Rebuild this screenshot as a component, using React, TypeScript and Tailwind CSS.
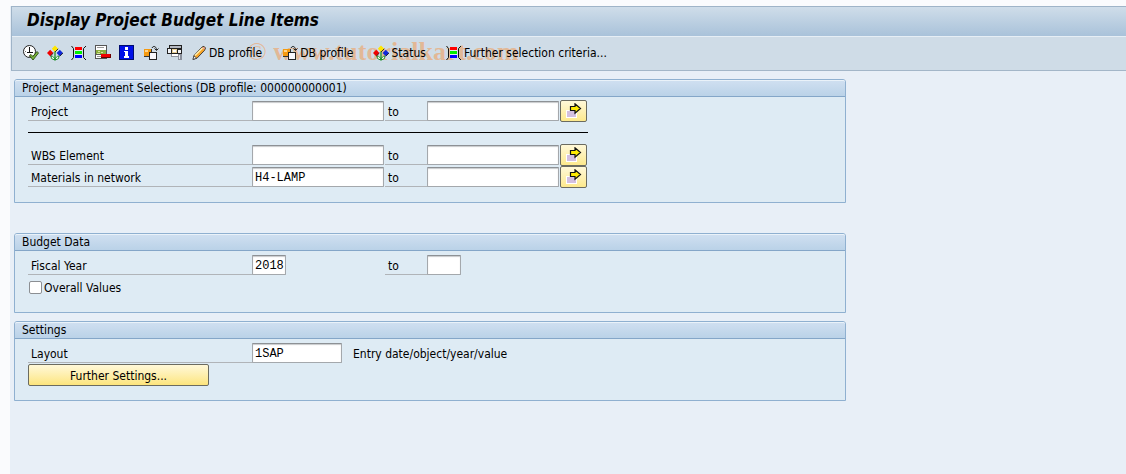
import type { InputHTMLAttributes, ReactNode } from "react"

function Icon({ children }: { children: ReactNode }) {
  return (
    <svg width="16" height="16" viewBox="0 0 16 16" className="shrink-0" aria-hidden="true">
      {children}
    </svg>
  )
}

function ExecuteIcon() {
  return (
    <Icon>
      <circle cx="6.5" cy="6.5" r="6" fill="#fff" stroke="#222" strokeWidth="1" />
      <path d="M6.500 2v5.500M4 7.500h6" stroke="#111" fill="none" />
      <path d="M2 6.500h1M6.500 11v1" stroke="#777" />
      <path d="M6.500 10.500l1.500-1 2 2L14 6.500l1.500 1.500L10 15z" fill="#7cb83e" stroke="#2c4a12" strokeWidth=".9" />
    </Icon>
  )
}

function StatusIcon() {
  return (
    <Icon>
      <path d="M4 11c2 0 3.500 1.500 4 4 .5-2.500 2-4 4-4l-.5 2.500L8.500 15h-1l-3-1.500z" fill="#f2fbf0" stroke="#128a1c" strokeWidth=".9" />
      <path d="M8 6v9" stroke="#128a1c" strokeWidth="1.200" />
      <path d="M8 .6l3.200 3.200L8 7 4.800 3.800z" fill="#ffe600" />
      <path d="M3.200 4.800L6.400 8l-3.200 3.200L0 8z" fill="#f00000" />
      <path d="M12.800 4.800L16 8l-3.200 3.200L9.600 8z" fill="#1028d8" />
      <path d="M8 7l3.200-3.200M3.200 11.200L6.400 8M12.800 11.200L16 8" stroke="#222" strokeWidth=".9" fill="none" />
    </Icon>
  )
}

function SelectionIcon() {
  return (
    <Icon>
      <path d="M.5 1l2 2.500v9L.5 15M15 1l-2.500 2.500v9L15 15" fill="none" stroke="#111" />
      <g shapeRendering="crispEdges">
        <rect x="4" y="2" width="7" height="11" fill="#e6edf3" />
        <rect x="4" y="2" width="7" height="3" fill="#f00" />
        <rect x="4" y="6" width="7" height="3" fill="#0e0" />
        <rect x="4" y="10" width="7" height="3" fill="#00f" />
      </g>
    </Icon>
  )
}

function DeleteRowIcon() {
  return (
    <Icon>
      <g shapeRendering="crispEdges">
        <path d="M0 0h12v14H0z" fill="#555" />
        <path d="M1 1h10v4H1zM1 10h10v3H1z" fill="#fff" />
        <path d="M2 2h7v1H2zM2 11h6v1H2z" fill="#999" />
        <path d="M1 5h10v4H1z" fill="#8aad3c" />
        <path d="M3 6h2v1H3zM6 7h2v1H6zM2 8h3v1H2z" fill="#d6e69a" />
        <path d="M6 9h10v4H6z" fill="#6b0000" />
        <path d="M6 9h9v3H6z" fill="#f00000" />
      </g>
    </Icon>
  )
}

function InfoIcon() {
  return (
    <Icon>
      <g shapeRendering="crispEdges">
        <path d="M0 0h15v15H0z" fill="#000c70" />
        <path d="M1 1h13v13H1z" fill="#0010e8" />
        <path d="M6 2h3v3H6zM5 6h4v5h1v2H5v-2h1V7H5z" fill="#fff" />
      </g>
    </Icon>
  )
}

function VariantIcon() {
  return (
    <Icon>
      <path d="M9 3C10 .5 13.500 1 13.500 5M11.500 3.500l2 2 2-2" fill="none" stroke="#222" />
      <g shapeRendering="crispEdges">
        <path d="M1 4h8v8H1z" fill="#333" />
        <path d="M1 4h7v7H1z" fill="#f59a10" />
        <path d="M2 5h3v2H2z" fill="#ffd48a" />
        <path d="M6 7h8v8H6z" fill="#222" />
        <path d="M7 8h6v6H7z" fill="#f8f8fc" />
      </g>
    </Icon>
  )
}

function ProfileIcon() {
  return (
    <Icon>
      <g shapeRendering="crispEdges">
        <path d="M2 0h13v9H0V3h2z" fill="#222" />
        <path d="M3 1h11v2H3z" fill="#b4b8c2" />
        <path d="M1 4h3v4H1zM11 5h3v3h-3z" fill="#f2f4f8" />
        <path d="M5 4h5v4H5z" fill="#e8cf96" />
        <path d="M6 5h3v2H6z" fill="#fff" />
        <path d="M4 9h11v3H4z" fill="#8d919b" />
        <path d="M5 9h6v2H5z" fill="#fff" />
        <path d="M11 10h4v5h-4z" fill="#8a909c" />
        <path d="M12 10h1v4h-1z" fill="#e4e6ee" />
      </g>
    </Icon>
  )
}

function PencilIcon() {
  return (
    <Icon>
      <path d="M2 14.500l1-4L11 2l2-.7L14.500 3l-.8 2.200-7.700 8z" fill="#f7a427" stroke="#333" strokeWidth=".9" />
      <path d="M4 10.500L11.500 3" stroke="#fff0b0" strokeWidth="1.500" />
      <path d="M2 14.500l1-3.500 2.500 2z" fill="#fff" stroke="#333" strokeWidth=".7" />
      <path d="M11.500 2.500l1.500-.5.8 1.500-1 1z" fill="#e8a0b0" />
    </Icon>
  )
}

function MultipleIcon() {
  return (
    <Icon>
      <g shapeRendering="crispEdges">
        <path d="M0 7h11v8H0z" fill="#fff" />
        <path d="M1 8h9v6H1z" fill="#d3bfe0" />
      </g>
      <path d="M4.500 3.500H9V.8L14.500 5.500 9 10.200V7.500H4.500z" fill="#ffea00" stroke="#111" strokeWidth="1.200" />
    </Icon>
  )
}

const iconActions = [
  { label: "Execute", icon: <ExecuteIcon /> },
  { label: "Status", icon: <StatusIcon /> },
  { label: "Dynamic selections", icon: <SelectionIcon /> },
  { label: "Delete row", icon: <DeleteRowIcon /> },
  { label: "Information", icon: <InfoIcon /> },
  { label: "Get variant", icon: <VariantIcon /> },
  { label: "Profile", icon: <ProfileIcon /> },
]

const textActions = [
  { label: "DB profile", icon: <PencilIcon /> },
  { label: "DB profile", icon: <VariantIcon /> },
  { label: "Status", icon: <StatusIcon /> },
  { label: "Further selection criteria...", icon: <SelectionIcon /> },
]

function Toolbar() {
  return (
    <div className="relative flex h-[34px] items-center gap-2 border-b border-[#a3b6c8] bg-[#cfdce7] pb-px pl-[11px]">
      {/* Watermark sits under the toolbar buttons */}
      <span className="pointer-events-none absolute top-0 left-[235px] font-['Liberation_Serif',serif] text-[26px] leading-[29px] font-bold whitespace-nowrap text-[#f0a060]/60">
        <span className="font-normal">©</span> www.tutorialkart.com
      </span>
      {iconActions.map((action) => (
        <button key={action.label} type="button" aria-label={action.label} className="relative">
          {action.icon}
        </button>
      ))}
      <div className="relative flex items-center gap-5">
        {textActions.map((action, i) => (
          <button key={i} type="button" className="flex items-center gap-0.5 whitespace-nowrap">
            {action.icon}
            {action.label}
          </button>
        ))}
      </div>
    </div>
  )
}

function Panel({ title, children }: { title: string; children: ReactNode }) {
  return (
    <section className="w-full max-w-[832px] rounded-t-[3px] border border-[#8fb0d0] bg-[#deebf4]">
      <h2 className="h-[17px] rounded-t-[2px] border-t border-b border-t-[#eaf2f9] border-b-[#84a6c8] bg-linear-to-b from-[#cfdff0] to-[#bad2e8] pl-[7px] leading-[15px]">
        {title}
      </h2>
      <div className="pt-[3px] pb-3.5 pl-[13px]">{children}</div>
    </section>
  )
}

function Row({ children }: { children: ReactNode }) {
  return <div className="grid h-[22px] grid-cols-[224px_133px_42px_133px_27px] items-center">{children}</div>
}

function Label({ htmlFor, children }: { htmlFor: string; children: ReactNode }) {
  return (
    <label htmlFor={htmlFor} className="h-5 border-b border-[#b0b4b8] pt-0.5 pl-[3px] leading-[18px]">
      {children}
    </label>
  )
}

function Field({ className = "w-[132px]", ...props }: InputHTMLAttributes<HTMLInputElement>) {
  return (
    <input
      type="text"
      className={`h-5 rounded-[1px] border border-[#a4a8ac] border-t-[#8d9195] bg-white pt-0.5 pl-0.5 font-['Liberation_Mono',monospace] text-[12px] shadow-[inset_0_1px_1px_#c8cacc] outline-none ${className}`}
      {...props}
    />
  )
}

function RangeRow({ id, label, value }: { id: string; label: string; value?: string }) {
  return (
    <Row>
      <Label htmlFor={`${id}-from`}>{label}</Label>
      <Field id={`${id}-from`} defaultValue={value} />
      <Label htmlFor={`${id}-to`}>to</Label>
      <Field id={`${id}-to`} />
      <button
        type="button"
        aria-label={`Multiple selection for ${label}`}
        className="flex h-[22px] w-[27px] items-center justify-center rounded-[2px] border border-[#6b6b60] bg-linear-to-b from-[#fff8d8] to-[#fde98c]"
      >
        <MultipleIcon />
      </button>
    </Row>
  )
}

export default function App() {
  return (
    <div className="min-h-screen bg-[#fafbfd] pt-1.5 pl-2.5 font-['DejaVu_Sans_Condensed','DejaVu_Sans',sans-serif] text-[12px] text-black">
      <div className="min-h-[calc(100vh-6px)] bg-[#e8eff7]">
        <header className="ml-px border-t border-l border-[#9fb4c8]">
          <h1 className="flex h-[30px] items-center border-b border-[#e6eef5] bg-linear-to-b from-[#cfdde9] to-[#a9c2da] pb-0.5 pl-[15px] text-[17px] font-bold italic">
            Display Project Budget Line Items
          </h1>
          <Toolbar />
        </header>

        <main className="px-1 pt-2">
          <Panel title="Project Management Selections (DB profile: 000000000001)">
            <RangeRow id="project" label="Project" />
            <div className="flex h-[22px] items-center pb-0.5">
              <hr className="w-[560px] border-black" />
            </div>
            <RangeRow id="wbs" label="WBS Element" />
            <RangeRow id="materials" label="Materials in network" value="H4-LAMP" />
          </Panel>

          <div className="mt-[30px] flex flex-col gap-2">
            <Panel title="Budget Data">
              <Row>
                <Label htmlFor="year-from">Fiscal Year</Label>
                <Field id="year-from" defaultValue="2018" className="w-[34px]" />
                <Label htmlFor="year-to">to</Label>
                <Field id="year-to" className="w-[34px]" />
              </Row>
              <label className="flex h-[22px] items-center gap-0.5 pt-px pl-px">
                <input
                  type="checkbox"
                  className="size-[13px] appearance-none rounded-[2px] border border-[#8c8f93] bg-white"
                />
                Overall Values
              </label>
            </Panel>

            <Panel title="Settings">
              <Row>
                <Label htmlFor="layout">Layout</Label>
                <Field id="layout" defaultValue="1SAP" className="w-[90px]" />
                <span className="-ml-8 pt-0.5 whitespace-nowrap">Entry date/object/year/value</span>
              </Row>
              <button
                type="button"
                className="block h-[22px] w-[181px] rounded-[2px] border border-[#6b6b60] bg-linear-to-b from-[#fff8d8] to-[#fde57c] pt-px"
              >
                Further Settings...
              </button>
            </Panel>
          </div>
        </main>
      </div>
    </div>
  )
}
